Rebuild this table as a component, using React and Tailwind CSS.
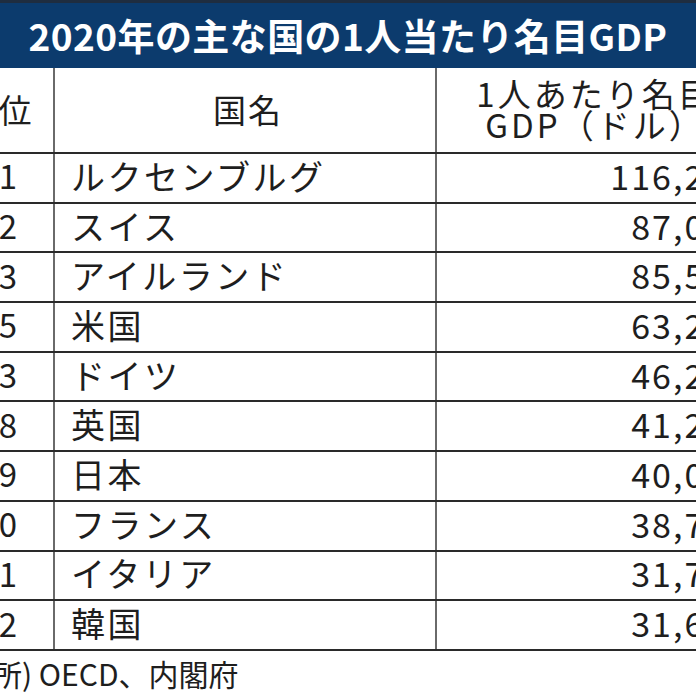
import React from "react";

const rows = [
  ["1", "ルクセンブルグ", "116,260"],
  ["2", "スイス", "87,097"],
  ["3", "アイルランド", "85,527"],
  ["5", "米国", "63,206"],
  ["13", "ドイツ", "46,252"],
  ["18", "英国", "41,232"],
  ["19", "日本", "40,089"],
  ["20", "フランス", "38,790"],
  ["21", "イタリア", "31,770"],
  ["22", "韓国", "31,631"],
];

const font = { fontFamily: '"Noto Sans CJK JP", "Noto Sans", sans-serif' };

export default function App() {
  return (
    <div
      className="w-[696px] h-[696px] overflow-hidden bg-white text-[#1e1e1e]"
      style={font}
    >
      <div className="h-[68px] border-t-[3px] border-[#1f2d40] bg-[#0c3b6d] flex items-center justify-center">
        <span className="text-white font-bold text-[37px] leading-none tracking-[0.4px]">
          2020年の主な国の1人当たり名目GDP
        </span>
      </div>
      <div className="ml-[-56px] w-[820px]">
        <div className="flex h-[86px] border-b-2 border-[#2a2a2a]">
          <div className="w-[111px] border-r-2 border-[#6a6a6a] flex items-center justify-center text-[33px] leading-none tracking-[1px] pb-[2px]">
            順位
          </div>
          <div className="w-[382px] border-r-2 border-[#6a6a6a] flex items-center justify-center text-[33px] leading-none tracking-[2px] pl-[6px] pb-[2px]">
            国名
          </div>
          <div className="w-[320px] flex flex-col items-center justify-center text-[33px] leading-[31px] tracking-[3px] pr-[4px] pb-[2px]">
            <span>1人あたり名目</span>
            <span>GDP（ドル）</span>
          </div>
        </div>
        {rows.map(([rank, name, val]) => (
          <div key={name} className="flex h-[49.7px] border-b-2 border-[#2a2a2a]">
            <div className="w-[111px] border-r-2 border-[#6a6a6a] flex items-center justify-end pr-[36px] text-[33px] leading-none pb-[4px]">
              {rank}
            </div>
            <div className="w-[382px] border-r-2 border-[#6a6a6a] flex items-center pl-[16px] text-[34px] leading-none tracking-[2.5px] pb-[4px]">
              {name}
            </div>
            <div className="w-[320px] flex items-center justify-end pr-[10px] text-[34px] leading-none tracking-[2px] pb-[4px]">
              {val}
            </div>
          </div>
        ))}
        <div className="h-[44px] flex items-center pl-[18px] text-[30px] leading-none">
          出所) OECD、内閣府
        </div>
      </div>
    </div>
  );
}
